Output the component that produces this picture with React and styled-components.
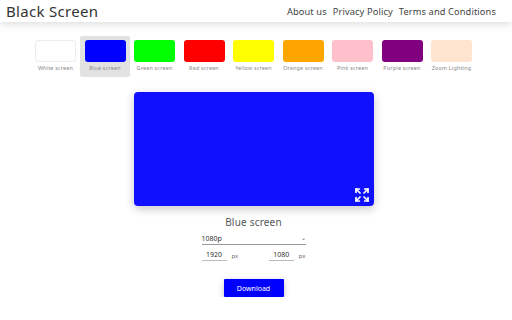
import React, { useState } from "react";
import styled, { createGlobalStyle } from "styled-components";
import { Expand } from "lucide-react";

const GlobalStyle = createGlobalStyle`
  body {
    margin: 0;
    background: #fff;
    font-family: "Noto Sans", "Open Sans", sans-serif;
    color: #444;
  }
`;

const Header = styled.header`
  display: flex;
  align-items: center;
  justify-content: space-between;
  height: 22px;
  padding: 0 16px 0 6px;
  box-shadow: 0 2px 8px rgba(0, 0, 0, 0.14);
`;

const Brand = styled.div`
  font-size: 15px;
  color: #333;
  letter-spacing: 0.3px;
`;

const Nav = styled.nav`
  display: flex;
  gap: 6px;
`;

const NavLink = styled.a`
  font-size: 9.3px;
  color: #444;
  text-decoration: none;
  letter-spacing: 0.1px;
`;

const Main = styled.main`
  padding-right: 5px;
`;

const Swatches = styled.div`
  display: flex;
  justify-content: center;
  margin-top: 14px;
`;

const Tile = styled.div`
  width: 49.5px;
  height: 41px;
  box-sizing: border-box;
  padding: 4px 4px 0;
  border-radius: 2px;
  background: ${(p) => (p.$active ? "#e2e2e2" : "transparent")};
  display: flex;
  flex-direction: column;
  align-items: center;
`;

const Chip = styled.div`
  width: 41px;
  height: 22px;
  box-sizing: border-box;
  border-radius: 3px;
  background: ${(p) => p.$color};
  border: ${(p) => (p.$color === "#ffffff" ? "1px solid #ececec" : "none")};
`;

const ChipLabel = styled.div`
  margin-top: 2px;
  font-size: 5.4px;
  letter-spacing: 0.2px;
  color: #888;
  white-space: nowrap;
`;

const Preview = styled.div`
  position: relative;
  width: 240px;
  height: 114px;
  margin: 15px auto 0;
  border-radius: 4px;
  background: ${(p) => p.$color};
  box-shadow: 0 3px 10px rgba(0, 0, 0, 0.22);
`;

const FullButton = styled.div`
  position: absolute;
  right: 4px;
  bottom: 3px;
  color: #fff;
  display: flex;
`;

const Controls = styled.div`
  display: flex;
  flex-direction: column;
  align-items: center;
`;

const Title = styled.div`
  margin-top: 9px;
  font-size: 10px;
  color: #555;
  letter-spacing: 0.2px;
`;

const Select = styled.div`
  margin-top: 4px;
  width: 104px;
  height: 10px;
  display: flex;
  justify-content: space-between;
  align-items: center;
  border-bottom: 1px solid #999;
  font-size: 7px;
  color: #333;
  padding-bottom: 1px;
`;

const Chevron = styled.span`
  font-size: 6px;
  color: #555;
`;

const SizeRow = styled.div`
  margin-top: 5px;
  width: 104px;
  display: flex;
  justify-content: space-between;
`;

const SizeField = styled.div`
  display: flex;
  align-items: center;
  gap: 5px;
`;

const SizeValue = styled.div`
  width: 25px;
  text-align: center;
  font-size: 7px;
  color: #333;
  border-bottom: 1px solid #bbb;
  padding-bottom: 1px;
`;

const Unit = styled.span`
  font-size: 6px;
  color: #666;
`;

const DownloadButton = styled.button`
  margin-top: 18px;
  width: 60px;
  height: 18px;
  border: none;
  border-radius: 1px;
  background: #0000ff;
  color: #fff;
  font-family: inherit;
  font-size: 7px;
  box-shadow: 0 2px 6px rgba(0, 0, 0, 0.25);
`;

const colors = [
  ["White screen", "#ffffff"],
  ["Blue screen", "#0000ff"],
  ["Green screen", "#00ff00"],
  ["Red screen", "#ff0000"],
  ["Yellow screen", "#ffff00"],
  ["Orange screen", "#ffa500"],
  ["Pink screen", "#ffc0cb"],
  ["Purple screen", "#800080"],
  ["Zoom Lighting", "#ffe4cf"],
];

export default function App() {
  const [active] = useState(1);
  return (
    <>
      <GlobalStyle />
      <Header>
        <Brand>Black Screen</Brand>
        <Nav>
          <NavLink href="#">About us</NavLink>
          <NavLink href="#">Privacy Policy</NavLink>
          <NavLink href="#">Terms and Conditions</NavLink>
        </Nav>
      </Header>
      <Main>
        <Swatches>
          {colors.map(([name, c], i) => (
            <Tile key={name} $active={i === active}>
              <Chip $color={c} />
              <ChipLabel>{name}</ChipLabel>
            </Tile>
          ))}
        </Swatches>
        <Preview $color="#1010ff">
          <FullButton>
            <Expand size={16} strokeWidth={2.6} />
          </FullButton>
        </Preview>
        <Controls>
          <Title>Blue screen</Title>
          <Select>
            <span>1080p</span>
            <Chevron>⌄</Chevron>
          </Select>
          <SizeRow>
            <SizeField>
              <SizeValue>1920</SizeValue>
              <Unit>px</Unit>
            </SizeField>
            <SizeField>
              <SizeValue>1080</SizeValue>
              <Unit>px</Unit>
            </SizeField>
          </SizeRow>
          <DownloadButton>Download</DownloadButton>
        </Controls>
      </Main>
    </>
  );
}
